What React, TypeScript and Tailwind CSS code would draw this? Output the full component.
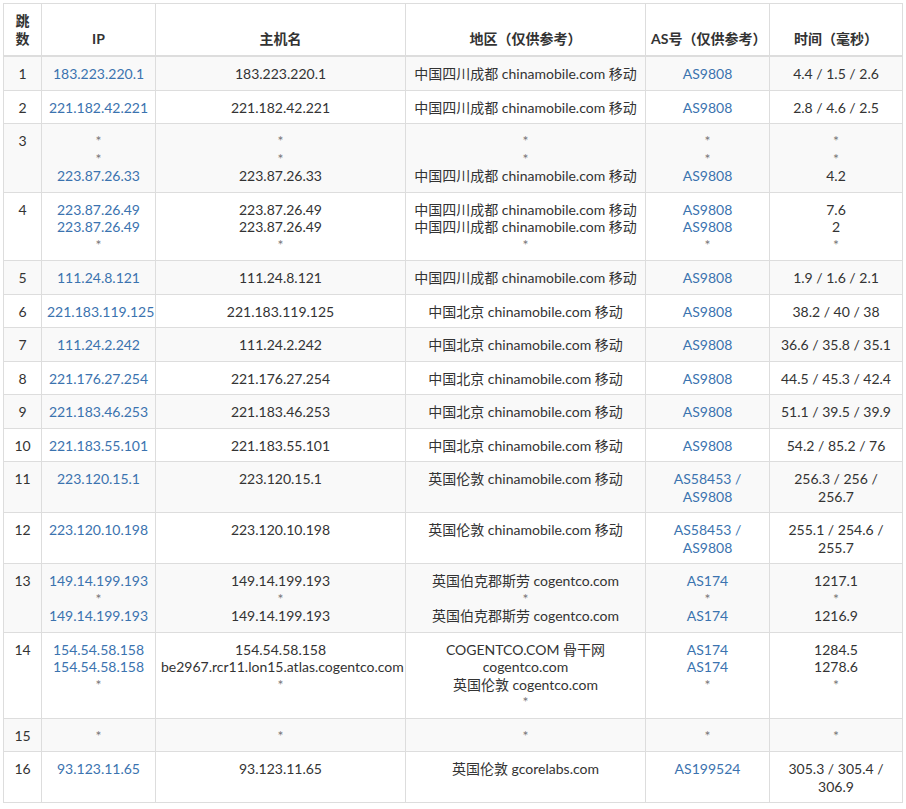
const A = "text-[#3b73af]";

type Cell = string[];
type Row = [string, Cell, Cell, Cell, Cell, Cell];

const rows: Row[] = [
  ["1", ["183.223.220.1"], ["183.223.220.1"], ["中国四川成都 chinamobile.com 移动"], ["AS9808"], ["4.4 / 1.5 / 2.6"]],
  ["2", ["221.182.42.221"], ["221.182.42.221"], ["中国四川成都 chinamobile.com 移动"], ["AS9808"], ["2.8 / 4.6 / 2.5"]],
  ["3", ["*", "*", "223.87.26.33"], ["*", "*", "223.87.26.33"], ["*", "*", "中国四川成都 chinamobile.com 移动"], ["*", "*", "AS9808"], ["*", "*", "4.2"]],
  ["4", ["223.87.26.49", "223.87.26.49", "*"], ["223.87.26.49", "223.87.26.49", "*"], ["中国四川成都 chinamobile.com 移动", "中国四川成都 chinamobile.com 移动", "*"], ["AS9808", "AS9808", "*"], ["7.6", "2", "*"]],
  ["5", ["111.24.8.121"], ["111.24.8.121"], ["中国四川成都 chinamobile.com 移动"], ["AS9808"], ["1.9 / 1.6 / 2.1"]],
  ["6", ["221.183.119.125"], ["221.183.119.125"], ["中国北京 chinamobile.com 移动"], ["AS9808"], ["38.2 / 40 / 38"]],
  ["7", ["111.24.2.242"], ["111.24.2.242"], ["中国北京 chinamobile.com 移动"], ["AS9808"], ["36.6 / 35.8 / 35.1"]],
  ["8", ["221.176.27.254"], ["221.176.27.254"], ["中国北京 chinamobile.com 移动"], ["AS9808"], ["44.5 / 45.3 / 42.4"]],
  ["9", ["221.183.46.253"], ["221.183.46.253"], ["中国北京 chinamobile.com 移动"], ["AS9808"], ["51.1 / 39.5 / 39.9"]],
  ["10", ["221.183.55.101"], ["221.183.55.101"], ["中国北京 chinamobile.com 移动"], ["AS9808"], ["54.2 / 85.2 / 76"]],
  ["11", ["223.120.15.1"], ["223.120.15.1"], ["英国伦敦 chinamobile.com 移动"], ["AS58453 /", "AS9808"], ["256.3 / 256 / 256.7"]],
  ["12", ["223.120.10.198"], ["223.120.10.198"], ["英国伦敦 chinamobile.com 移动"], ["AS58453 /", "AS9808"], ["255.1 / 254.6 /", "255.7"]],
  ["13", ["149.14.199.193", "*", "149.14.199.193"], ["149.14.199.193", "*", "149.14.199.193"], ["英国伯克郡斯劳 cogentco.com", "*", "英国伯克郡斯劳 cogentco.com"], ["AS174", "*", "AS174"], ["1217.1", "*", "1216.9"]],
  ["14", ["154.54.58.158", "154.54.58.158", "*"], ["154.54.58.158", "be2967.rcr11.lon15.atlas.cogentco.com", "*"], ["COGENTCO.COM 骨干网", "cogentco.com", "英国伦敦 cogentco.com", "*"], ["AS174", "AS174", "*"], ["1284.5", "1278.6", "*"]],
  ["15", ["*"], ["*"], ["*"], ["*"], ["*"]],
  ["16", ["93.123.11.65"], ["93.123.11.65"], ["英国伦敦 gcorelabs.com"], ["AS199524"], ["305.3 / 305.4 /", "306.9"]],
];

function Lines({ items, link }: { items: Cell; link?: boolean }) {
  return (
    <>
      {items.map((t, i) => (
        <div key={i} className={t === "*" ? "text-[#777]" : link ? A : ""}>
          {t}
        </div>
      ))}
    </>
  );
}

export default function App() {
  const td = "border border-[#ddd] px-[5px] pt-2 pb-[7px] align-top text-center";
  const th = "border border-b-2 border-[#ddd] px-[5px] py-2 align-bottom";
  return (
    <div className="bg-white pl-[3px] pt-[3px] text-[14px] leading-[17.5px] text-[#333]" style={{ fontFamily: 'Lato, "Noto Sans CJK SC", sans-serif' }}>
      <table className="w-[899px] table-fixed border-collapse">
        <colgroup>
          <col className="w-[38px]" />
          <col className="w-[114px]" />
          <col className="w-[250px]" />
          <col className="w-[240px]" />
          <col className="w-[124px]" />
          <col className="w-[133px]" />
        </colgroup>
        <thead>
          <tr className="font-bold">
            <th className={th}>跳数</th>
            <th className={th}>IP</th>
            <th className={th}>主机名</th>
            <th className={th}>地区（仅供参考）</th>
            <th className={th + " whitespace-nowrap"}>AS号（仅供参考）</th>
            <th className={th}>时间（毫秒）</th>
          </tr>
        </thead>
        <tbody>
          {rows.map((r, i) => (
            <tr key={r[0]} className={i % 2 === 0 ? "bg-[#f9f9f9]" : "bg-white"}>
              <td className={td}>{r[0]}</td>
              <td className={td}><Lines items={r[1]} link /></td>
              <td className={td}><Lines items={r[2]} /></td>
              <td className={td}><Lines items={r[3]} /></td>
              <td className={td}><Lines items={r[4]} link /></td>
              <td className={td}><Lines items={r[5]} /></td>
            </tr>
          ))}
        </tbody>
      </table>
    </div>
  );
}
